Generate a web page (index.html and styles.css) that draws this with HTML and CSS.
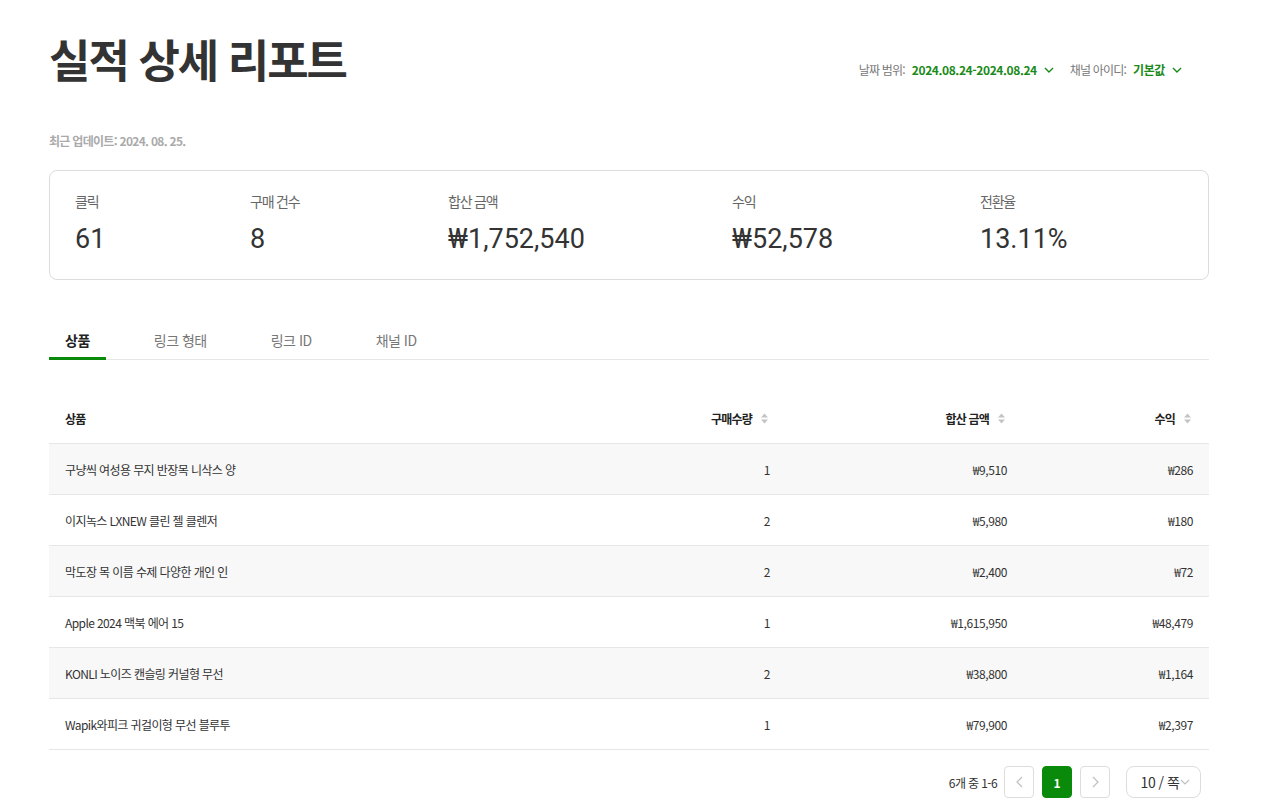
FILE: index.html
```html
<!DOCTYPE html>
<html lang="ko">
<head>
<meta charset="utf-8">
<title>실적 상세 리포트</title>
<link rel="stylesheet" href="styles.css">
</head>
<body>
<div class="page">
  <header class="header">
    <h1 class="title">실적 상세 리포트</h1>
    <div class="filters">
      <div class="filter">
        <span class="filter-label">날짜 범위:</span>
        <span class="filter-value">2024.08.24-2024.08.24</span>
        <svg class="chev" width="10" height="6" viewBox="0 0 10 6"><path d="M1 1l4 4 4-4" fill="none" stroke="#1a8a1a" stroke-width="1.4"/></svg>
      </div>
      <div class="filter">
        <span class="filter-label">채널 아이디:</span>
        <span class="filter-value">기본값</span>
        <svg class="chev" width="10" height="6" viewBox="0 0 10 6"><path d="M1 1l4 4 4-4" fill="none" stroke="#1a8a1a" stroke-width="1.4"/></svg>
      </div>
    </div>
  </header>

  <p class="updated">최근 업데이트: 2024. 08. 25.</p>

  <section class="stats">
    <div class="stat s1"><div class="stat-label">클릭</div><div class="stat-value">61</div></div>
    <div class="stat s2"><div class="stat-label">구매 건수</div><div class="stat-value">8</div></div>
    <div class="stat s3"><div class="stat-label">합산 금액</div><div class="stat-value">₩1,752,540</div></div>
    <div class="stat s4"><div class="stat-label">수익</div><div class="stat-value">₩52,578</div></div>
    <div class="stat s5"><div class="stat-label">전환율</div><div class="stat-value">13.11%</div></div>
  </section>

  <nav class="tabs">
    <div class="tab active">상품</div>
    <div class="tab">링크 형태</div>
    <div class="tab">링크 ID</div>
    <div class="tab">채널 ID</div>
  </nav>

  <div class="table">
    <div class="row head">
      <div class="cell">상품</div>
      <div class="cell num">구매수량<svg class="sort" width="7" height="11" viewBox="0 0 7 11"><path d="M3.5 0.5L7 4.5H0z" fill="#c4c4c4"/><path d="M0 6.5h7L3.5 10.5z" fill="#c4c4c4"/></svg></div>
      <div class="cell num">합산 금액<svg class="sort" width="7" height="11" viewBox="0 0 7 11"><path d="M3.5 0.5L7 4.5H0z" fill="#c4c4c4"/><path d="M0 6.5h7L3.5 10.5z" fill="#c4c4c4"/></svg></div>
      <div class="cell num">수익<svg class="sort" width="7" height="11" viewBox="0 0 7 11"><path d="M3.5 0.5L7 4.5H0z" fill="#c4c4c4"/><path d="M0 6.5h7L3.5 10.5z" fill="#c4c4c4"/></svg></div>
    </div>
    <div class="row">
      <div class="cell">구냥씩 여성용 무지 반장목 니삭스 양</div>
      <div class="cell num">1</div>
      <div class="cell num">₩9,510</div>
      <div class="cell num">₩286</div>
    </div>
    <div class="row">
      <div class="cell">이지녹스 LXNEW 클린 젤 클렌저</div>
      <div class="cell num">2</div>
      <div class="cell num">₩5,980</div>
      <div class="cell num">₩180</div>
    </div>
    <div class="row">
      <div class="cell">막도장 목 이름 수제 다양한 개인 인</div>
      <div class="cell num">2</div>
      <div class="cell num">₩2,400</div>
      <div class="cell num">₩72</div>
    </div>
    <div class="row">
      <div class="cell">Apple 2024 맥북 에어 15</div>
      <div class="cell num">1</div>
      <div class="cell num">₩1,615,950</div>
      <div class="cell num">₩48,479</div>
    </div>
    <div class="row">
      <div class="cell">KONLI 노이즈 캔슬링 커널형 무선</div>
      <div class="cell num">2</div>
      <div class="cell num">₩38,800</div>
      <div class="cell num">₩1,164</div>
    </div>
    <div class="row">
      <div class="cell">Wapik와피크 귀걸이형 무선 블루투</div>
      <div class="cell num">1</div>
      <div class="cell num">₩79,900</div>
      <div class="cell num">₩2,397</div>
    </div>
  </div>

  <div class="pager">
    <span class="pager-total">6개 중 1-6</span>
    <button class="pg-btn" aria-label="이전"><svg width="7" height="12" viewBox="0 0 7 12"><path d="M6 1L1 6l5 5" fill="none" stroke="#bfbfbf" stroke-width="1.2"/></svg></button>
    <button class="pg-btn current">1</button>
    <button class="pg-btn" aria-label="다음"><svg width="7" height="12" viewBox="0 0 7 12"><path d="M1 1l5 5-5 5" fill="none" stroke="#bfbfbf" stroke-width="1.2"/></svg></button>
    <div class="size-select">10 / 쪽<svg width="10" height="6" viewBox="0 0 10 6"><path d="M1 1l4 4 4-4" fill="none" stroke="#bfbfbf" stroke-width="1.1"/></svg></div>
  </div>
</div>
</body>
</html>
```

FILE: styles.css
```css
* { box-sizing: border-box; }

body {
  margin: 0;
  font-family: "Noto Sans CJK KR", "Noto Sans", sans-serif;
  color: #333;
  background: #fff;
  letter-spacing: -0.5px;
}

.page {
  width: 1160px;
  margin-left: 49px;
  padding-top: 29px;
}

.header {
  display: flex;
  justify-content: space-between;
  align-items: flex-start;
}

.title {
  margin: 0;
  font-size: 45px;
  line-height: 60px;
  font-weight: 700;
  color: #333;
  letter-spacing: -2px;
}

.filters {
  display: flex;
  gap: 16px;
  margin-top: 32px;
  padding-right: 27px;
  font-size: 12px;
  line-height: 18px;
}

.filter {
  display: flex;
  align-items: center;
}

.filter-label {
  color: #777;
  letter-spacing: -0.8px;
  margin-right: 7px;
}

.filter-value {
  color: #1a8a1a;
  font-weight: 700;
  letter-spacing: -0.4px;
}

.chev { margin-left: 7px; }

.updated {
  margin: 43px 0 0;
  font-size: 12px;
  line-height: 18px;
  font-weight: 700;
  color: #aaa;
  letter-spacing: -0.7px;
}

.stats {
  margin-top: 20px;
  height: 110px;
  border: 1px solid #dcdcdc;
  border-radius: 8px;
  padding: 21px 25px 20px;
  display: flex;
}

.stat.s1 { width: 175px; }
.stat.s2 { width: 198px; }
.stat.s3 { width: 284px; }
.stat.s4 { width: 248px; }
.stat.s5 { flex: 1; }

.stat-label {
  font-size: 14px;
  line-height: 18px;
  color: #666;
  letter-spacing: -1.2px;
}

.stat-value {
  margin-top: 9px;
  font-family: Roboto, "Noto Sans", sans-serif;
  font-size: 27px;
  line-height: 40px;
  color: #333;
  letter-spacing: 0;
}

.tabs {
  margin-top: 40px;
  display: flex;
  gap: 32px;
  border-bottom: 1px solid #e6e6e6;
}

.tab {
  height: 40px;
  line-height: 40px;
  padding: 0 16px;
  font-size: 14px;
  color: #777;
  letter-spacing: -0.5px;
  margin-bottom: -1px;
}

.tab.active {
  color: #222;
  font-weight: 700;
  box-shadow: inset 0 -3px 0 #0a8a0a;
}

.table {
  margin-top: 34px;
}

.row {
  display: grid;
  grid-template-columns: 520px 217px 237px 186px;
  height: 51px;
  border-bottom: 1px solid #e6e6e6;
  font-size: 12px;
  color: #333;
}

.row:nth-child(even) { background: #f8f8f8; }

.row.head {
  height: 50px;
  font-weight: 700;
  color: #222;
  background: #fff;
}

.cell {
  display: flex;
  align-items: center;
  padding: 0 16px;
  letter-spacing: -0.6px;
}

.row.head .cell { letter-spacing: -0.8px; }

.cell.num {
  justify-content: flex-end;
  letter-spacing: -0.4px;
}

.row.head .cell.num { padding-right: 18px; letter-spacing: -0.8px; }

.sort { margin-left: 9px; }

.pager {
  margin-top: 16px;
  padding-right: 8px;
  display: flex;
  justify-content: flex-end;
  align-items: center;
  gap: 8px;
  font-size: 12px;
}

.pager-total {
  margin-right: -1px;
  color: #333;
  letter-spacing: -0.6px;
}

.pg-btn {
  width: 30px;
  height: 32px;
  border: 1px solid #ddd;
  border-radius: 4px;
  background: #fff;
  padding: 0;
  display: flex;
  align-items: center;
  justify-content: center;
  font-family: inherit;
  font-size: 12px;
}

.pg-btn.current {
  background: #0a8a0a;
  border-color: #0a8a0a;
  color: #fff;
  font-weight: 700;
}

.size-select {
  margin-left: 8px;
  width: 75px;
  height: 32px;
  border: 1px solid #ddd;
  border-radius: 8px;
  display: flex;
  align-items: center;
  justify-content: center;
  gap: 1px;
  font-size: 14px;
  color: #333;
  letter-spacing: -0.5px;
  padding-left: 4px;
}
```
